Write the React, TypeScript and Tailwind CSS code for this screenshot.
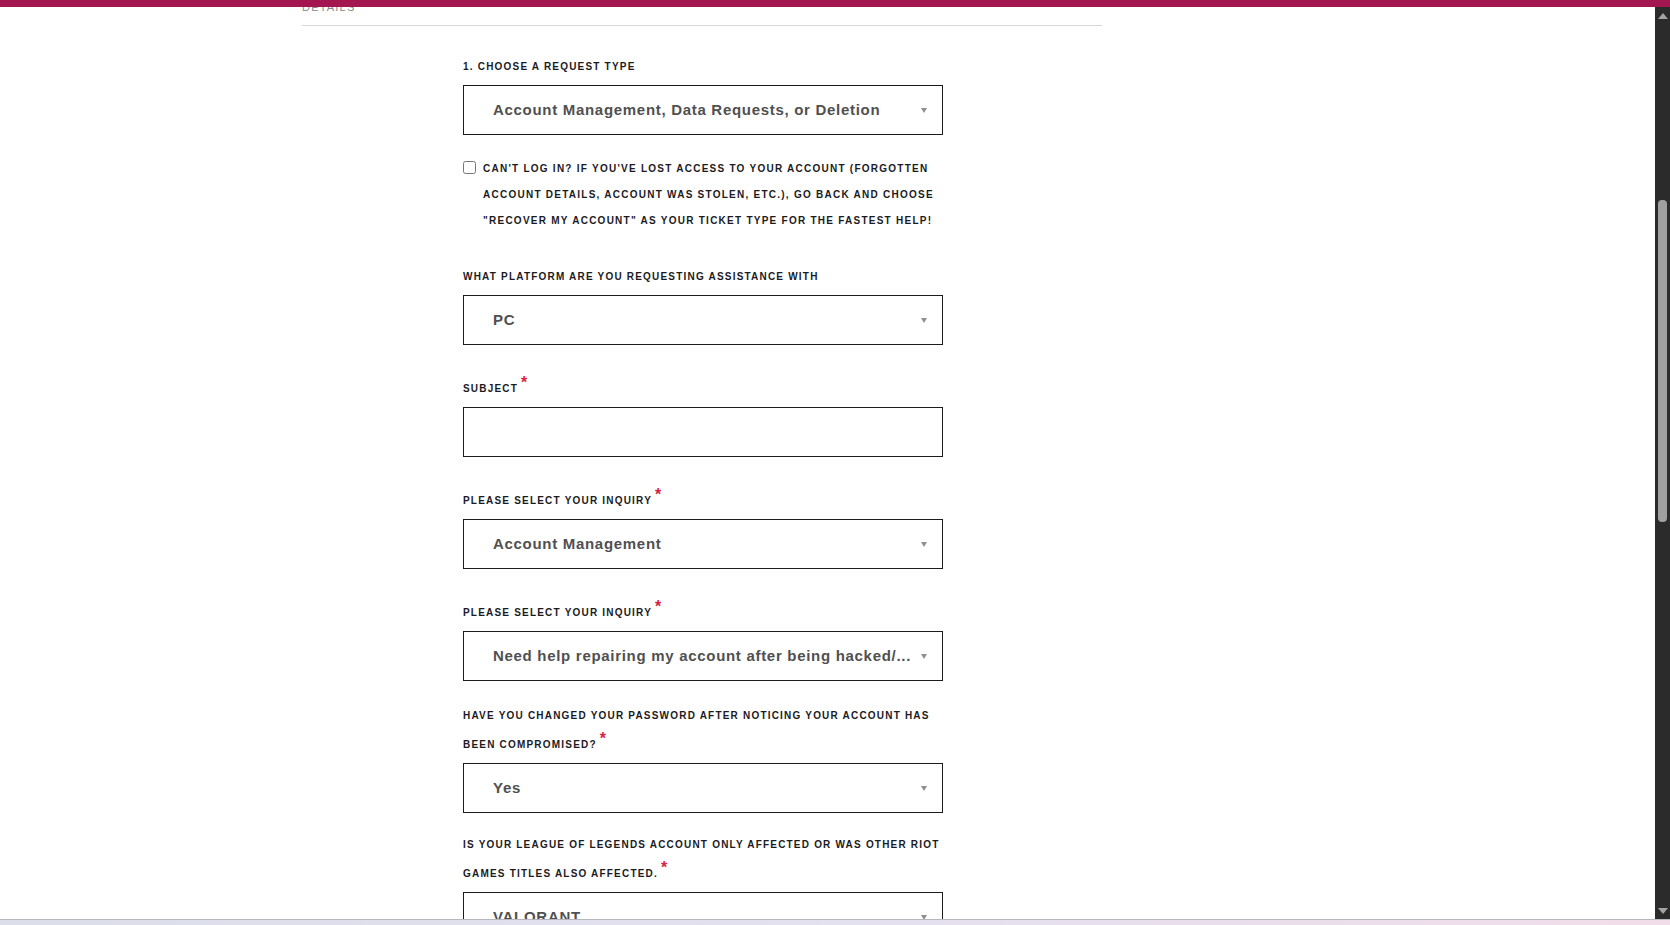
import React from 'react';

const Arrow = () => (
  <span className="w-0 h-0 shrink-0 border-l-[3px] border-r-[3px] border-t-[5px] border-l-transparent border-r-transparent border-t-[#8f8f8f]" />
);

const Select = ({ value, className = '' }: { value: string; className?: string }) => (
  <div className={`h-[50px] border border-[#1c1c1c] bg-white flex items-center pl-[29px] pr-[15px] gap-[8px] ${className}`}>
    <span className="flex-1 min-w-0 truncate text-[15px] font-bold text-[#505050] tracking-[0.7px]">{value}</span>
    <Arrow />
  </div>
);

const Req = () => <span className="ml-[3px] text-[16px] leading-none text-[#d9213f] align-[4px]">*</span>;

const labelCls = 'text-[10px] font-bold uppercase tracking-[1.2px] leading-[29px] text-[#1b1b1f]';

const App = () => {
  return (
    <div className="w-[1670px] h-[925px] overflow-hidden flex flex-col bg-white font-['Liberation_Sans',Arial,sans-serif]">
      <div className="h-[7px] shrink-0 bg-[#a31650] relative z-10" />

      <div className="flex flex-1 min-h-0">
        <main className="flex-1 overflow-hidden">
          <section className="ml-[302px] w-[800px]">
            <div className="-mt-[8px] h-[27px] pt-[1px] border-b border-[#d6d6d6] text-[11px] leading-[14px] tracking-[1.2px] uppercase text-[#8a8a8a]">
              Details
            </div>

            <div className="ml-[161px] w-[480px] flex flex-col">
              <div className={`${labelCls} mt-[26px]`}>1. Choose a request type</div>
              <Select value="Account Management, Data Requests, or Deletion" className="mt-[4px]" />

              <div className="mt-[21px] flex items-start gap-[7px]">
                <input type="checkbox" readOnly className="m-0 mt-[5px] w-[13px] h-[13px] shrink-0" />
                <p className="text-[10px] font-bold uppercase tracking-[1.25px] leading-[26px] text-[#1b1b1f]">
                  Can't log in? If you've lost access to your account (forgotten account details, account was stolen, etc.), go back and choose "recover my account" as your ticket type for the fastest help!
                </p>
              </div>

              <div className={`${labelCls} mt-[28px]`}>What platform are you requesting assistance with</div>
              <Select value="PC" className="mt-[4px]" />

              <div className={`${labelCls} mt-[29px]`}>
                Subject
                <Req />
              </div>
              <div className="mt-[4px] h-[50px] border border-[#1c1c1c] bg-white" />

              <div className={`${labelCls} mt-[29px]`}>
                Please select your inquiry
                <Req />
              </div>
              <Select value="Account Management" className="mt-[4px]" />

              <div className={`${labelCls} mt-[29px]`}>
                Please select your inquiry
                <Req />
              </div>
              <Select value="Need help repairing my account after being hacked/..." className="mt-[4px]" />

              <div className={`${labelCls} mt-[20px]`}>
                Have you changed your password after noticing your account has been compromised?
                <Req />
              </div>
              <Select value="Yes" className="mt-[4px]" />

              <div className={`${labelCls} mt-[17px]`}>
                Is your League of Legends account only affected or was other Riot Games titles also affected.
                <Req />
              </div>
              <Select value="VALORANT" className="mt-[4px]" />
            </div>
          </section>
        </main>

        <aside className="w-[15px] shrink-0 bg-[#2b2b2b] flex flex-col items-center">
          <span className="mt-[6px] w-0 h-0 border-l-[5px] border-r-[5px] border-b-[6px] border-l-transparent border-r-transparent border-b-[#a3a3a3]" />
          <div className="mt-[181px] w-[9px] h-[322px] rounded-[4px] bg-[#a0a0a0]" />
          <span className="mt-auto mb-[5px] w-0 h-0 border-l-[5px] border-r-[5px] border-t-[6px] border-l-transparent border-r-transparent border-t-[#a3a3a3]" />
        </aside>
      </div>

      <div className="h-[6px] shrink-0 border-t border-[#b6b6bf] bg-gradient-to-r from-[#dcdeea] via-[#e3e0ef] to-[#f1dde9]" />
    </div>
  );
};

export default App;
